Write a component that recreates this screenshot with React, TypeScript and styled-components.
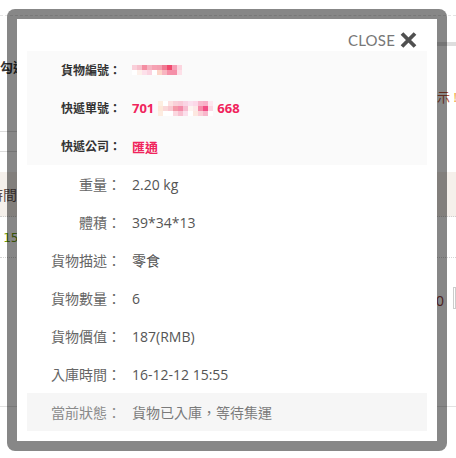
import React from 'react';
import styled, { createGlobalStyle } from 'styled-components';

const GlobalStyle = createGlobalStyle`
  html, body {
    margin: 0;
    padding: 0;
    background: #fff;
  }
  body {
    font-family: "Open Sans", "Noto Sans CJK TC", sans-serif;
  }
`;

const Screen = styled.div`
  position: relative;
  width: 456px;
  height: 458px;
  overflow: hidden;
  background: #fff;
`;

/* ---------- page behind the dialog ---------- */

const Backdrop = styled.div`
  display: flex;
  flex-direction: column;
  width: 456px;
  font-size: 13px;
`;

const TopRule = styled.div`
  height: 15px;
  border-bottom: 1px dashed #e4e4e4;
`;

const TabBar = styled.div`
  margin: 26px 0 0 420px;
  height: 4px;
  background: #dedede;
`;

const CheckLabel = styled.div`
  margin-top: 13px;
  height: 16px;
  line-height: 16px;
  font-weight: 700;
  color: #333;
`;

const Hint = styled.div`
  margin-top: 14px;
  padding-left: 424px;
  height: 16px;
  line-height: 16px;
  white-space: nowrap;
  color: #b8563c;

  span {
    color: #f0a030;
  }
`;

const LinedBox = styled.div`
  margin-top: 26px;
  width: 300px;
  height: 19px;
  border-top: 1px solid #dcdcdc;
  border-bottom: 1px solid #dcdcdc;
`;

const HeadBand = styled.div`
  margin-top: 20px;
  height: 44px;
  display: flex;
  align-items: center;
  background: #f5f0eb;
  border-bottom: 1px dotted #cfcfcf;
  color: #5e4e4a;
  font-size: 14px;

  span {
    margin-left: -11px;
  }
`;

const DataRow = styled.div<{ h: number }>`
  height: ${p => p.h}px;
  display: flex;
  align-items: center;
  border-bottom: 1px dotted #d4d4d4;
`;

const GreenNum = styled.span`
  margin-left: 3px;
  color: #6a9a10;
  font-family: "DejaVu Sans Mono", monospace;
  font-size: 13px;
`;

const PriceRow = styled.div`
  height: 149px;
  display: flex;
  align-items: flex-start;
  padding-top: 34px;
  box-sizing: border-box;
  border-bottom: 1px solid #e2e2e2;
`;

const Price = styled.span`
  margin-left: 436px;
  color: #8b3a3a;
  font-size: 14px;
  line-height: 18px;
`;

const QtyBox = styled.span`
  margin-left: 9px;
  width: 20px;
  height: 20px;
  margin-top: -5px;
  border: 1px solid #ccc;
`;

/* ---------- dialog ---------- */

const Dialog = styled.div`
  position: absolute;
  left: 7px;
  top: 9px;
  width: 440px;
  height: 442px;
  box-sizing: border-box;
  border: 10px solid rgba(0, 0, 0, 0.47);
  border-radius: 8px;
  background: #fff;
  background-clip: padding-box;
  padding: 0 10px 10px;
  display: flex;
  flex-direction: column;
`;

const Header = styled.div`
  height: 32px;
  box-sizing: border-box;
  padding: 13px 10px 0 0;
  display: flex;
  justify-content: flex-end;
  align-items: flex-start;
`;

const CloseButton = styled.button`
  display: flex;
  align-items: center;
  gap: 5px;
  height: 16px;
  padding: 0;
  border: 0;
  background: none;
  cursor: pointer;
  font-family: "Lato", "Open Sans", sans-serif;
  font-size: 15px;
  color: #777;
  letter-spacing: 0.2px;
`;

const Section = styled.div<{ tone: string }>`
  background: ${p => p.tone};
  display: flex;
  flex-direction: column;
`;

const Row = styled.div<{ tone?: string }>`
  height: 38px;
  display: grid;
  grid-template-columns: 94px 1fr;
  column-gap: 11px;
  align-items: center;
  background: ${p => p.tone || 'transparent'};
`;

const Label = styled.div<{ strong?: boolean; muted?: boolean }>`
  text-align: right;
  white-space: nowrap;
  font-size: ${p => (p.strong ? 12 : 14)}px;
  font-weight: ${p => (p.strong ? 700 : 400)};
  color: ${p => (p.strong ? '#333' : p.muted ? '#8a8a8a' : '#666')};
`;

const Value = styled.div<{ muted?: boolean }>`
  display: flex;
  align-items: center;
  font-size: 14px;
  color: ${p => (p.muted ? '#7a7a7a' : '#555')};
  white-space: nowrap;
`;

const RedValue = styled.div`
  display: flex;
  align-items: center;
  gap: 4px;
  font-size: 13px;
  font-weight: 700;
  color: #f0245c;
  white-space: nowrap;

  svg {
    display: block;
  }
`;

const mosaicOne = [
  ['#fad0da', '#f7c0cc', '#f48ea2', '#f6b3c1', '#f6a2b3', '#f49fb0', '#f07a93', '#f04a6e', '#f69cb4', '#fcd5df'],
  ['#ffffff', '#fdf0ea', '#fde0ea', '#fbd3e0', '#ffffff', '#fdd5c8', '#f8b5c0', '#f590a8', '#f58fa8', '#fde0e8'],
];

const mosaicTwo = [
  ['#fdeee0', '#ffffff', '#fce0e0', '#f9d0d8', '#f9c9d6', '#fad4e4', '#fbe0ee', '#fcd8e8', '#f8b8cc', '#f8b0c8', '#fde8f0'],
  ['#fde8d8', '#fad8d8', '#f8c8d0', '#f49aa8', '#f48aa8', '#f7bcd0', '#fdf4f0', '#fce8e8', '#f58aa8', '#f24f86', '#fbd8e4'],
  ['#fdece0', '#ffffff', '#ffffff', '#fbd8e0', '#f8c0d0', '#fbe0ec', '#ffffff', '#fde8e0', '#fbd0d8', '#f8b8cc', '#ffffff'],
];

const Mosaic: React.FC<{ cells: string[][]; size: number }> = ({ cells, size }) => (
  <svg width={cells[0].length * size} height={cells.length * size}>
    {cells.map((row, y) =>
      row.map((c, x) => (
        <rect key={`${x}-${y}`} x={x * size} y={y * size} width={size} height={size} fill={c} />
      ))
    )}
  </svg>
);

const CloseIcon = () => (
  <svg width="17" height="16" viewBox="0 0 17 16">
    <path d="M2 1.5 L15 14.5 M15 1.5 L2 14.5" stroke="#505050" strokeWidth="3.8" />
  </svg>
);

const details = [
  { label: '重量：', value: '2.20 kg' },
  { label: '體積：', value: '39*34*13' },
  { label: '貨物描述：', value: '零食' },
  { label: '貨物數量：', value: '6' },
  { label: '貨物價值：', value: '187(RMB)' },
  { label: '入庫時間：', value: '16-12-12 15:55' },
];

export default function App() {
  return (
    <Screen>
      <GlobalStyle />
      <Backdrop>
        <TopRule />
        <TabBar />
        <CheckLabel>勾選</CheckLabel>
        <Hint>
          提示 <span>!</span>
        </Hint>
        <LinedBox />
        <HeadBand>
          <span>時間</span>
        </HeadBand>
        <DataRow h={40}>
          <GreenNum>15</GreenNum>
        </DataRow>
        <PriceRow>
          <Price>0</Price>
          <QtyBox />
        </PriceRow>
      </Backdrop>

      <Dialog>
        <Header>
          <CloseButton>
            CLOSE
            <CloseIcon />
          </CloseButton>
        </Header>

        <Section tone="#fafafa">
          <Row>
            <Label strong>貨物編號：</Label>
            <RedValue>
              <Mosaic cells={mosaicOne} size={5} />
            </RedValue>
          </Row>
          <Row>
            <Label strong>快遞單號：</Label>
            <RedValue>
              701
              <Mosaic cells={mosaicTwo} size={5} />
              668
            </RedValue>
          </Row>
          <Row>
            <Label strong>快遞公司：</Label>
            <RedValue>匯通</RedValue>
          </Row>
        </Section>

        <Section tone="#fff">
          {details.map(d => (
            <Row key={d.label}>
              <Label>{d.label}</Label>
              <Value>{d.value}</Value>
            </Row>
          ))}
          <Row tone="#f6f6f6">
            <Label muted>當前狀態：</Label>
            <Value muted>貨物已入庫，等待集運</Value>
          </Row>
        </Section>
      </Dialog>
    </Screen>
  );
}
